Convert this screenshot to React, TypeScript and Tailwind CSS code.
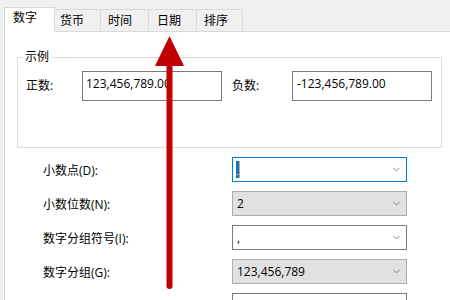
import { ChevronDown } from "lucide-react";

const tabs = [
  { label: "数字", w: "w-[51px]", pl: "pl-[8px]" },
  { label: "货币", w: "w-[46px]", pl: "pl-[5px]" },
  { label: "时间", w: "w-[48px]", pl: "pl-[7px]" },
  { label: "日期", w: "w-[48px]", pl: "pl-[8px]" },
  { label: "排序", w: "w-[46px]", pl: "pl-[7px]" },
];

type Row = { label: string; value: string; kind: "focus" | "gray" | "white" };

const rows: Row[] = [
  { label: "小数点(D):", value: ".", kind: "focus" },
  { label: "小数位数(N):", value: "2", kind: "gray" },
  { label: "数字分组符号(I):", value: ",", kind: "white" },
  { label: "数字分组(G):", value: "123,456,789", kind: "gray" },
  { label: "", value: "", kind: "white" },
];

function Combo({ value, kind }: { value: string; kind: Row["kind"] }) {
  const box =
    kind === "focus"
      ? "bg-white border-[#0078d7]"
      : kind === "gray"
        ? "bg-[#e1e1e1] border-[#adadad]"
        : "bg-white border-[#7a7a7a]";
  return (
    <div className={`flex h-[25px] w-[175px] shrink-0 items-center border pl-[3px] pr-[4px] ${box}`}>
      <div className="flex-1 text-[12px] leading-[16px] text-black">
        {kind === "focus" ? (
          <span className="flex items-end">
            <span className="flex h-[17px] w-[3px] items-end justify-center bg-[#0078d7] pb-[3px]">
              <span className="h-[1px] w-[1px] bg-white" />
            </span>
            <span className="h-[17px] w-[1px] bg-[#f7a13b]" />
          </span>
        ) : (
          <span className="pl-[1px]">{value}</span>
        )}
      </div>
      <ChevronDown size={11} strokeWidth={1.6} className="text-[#5a5a5a]" />
    </div>
  );
}

export default function App() {
  return (
    <div className="relative flex h-[300px] w-[450px] flex-col overflow-hidden bg-[#f0f0f0] font-['Open_Sans','Noto_Sans_CJK_SC',sans-serif] text-[12px] text-black">
      <div className="flex h-[31px] shrink-0 items-end pl-[4px]">
        {tabs.map((t, i) =>
          i === 0 ? (
            <div
              key={t.label}
              className={`relative z-10 -mb-px flex h-[25px] items-start border border-b-0 border-[#d9d9d9] bg-white pt-[2px] ${t.w} ${t.pl}`}
            >
              <span className="leading-[16px]">{t.label}</span>
            </div>
          ) : (
            <div
              key={t.label}
              className={`flex h-[22px] items-start border border-b-0 border-l-0 border-[#d9d9d9] bg-[#f0f0f0] pt-[3px] ${t.w} ${t.pl}`}
            >
              <span className="leading-[16px]">{t.label}</span>
            </div>
          )
        )}
      </div>

      <div className="ml-[4px] flex-1 border-l border-t border-[#d9d9d9] bg-white">
        <fieldset className="ml-[12px] mt-[17px] w-[425px] border border-[#dcdcdc] px-[5px] pb-[46px]">
          <legend className="pl-[2px] pr-[3px] leading-[16px]">示例</legend>
          <div className="mt-[6px] flex items-center">
            <span className="w-[59px] pl-[3px] leading-[16px]">正数:</span>
            <div className="h-[30px] w-[140px] border border-[#7a7a7a] px-[3px] pt-[4px] leading-[16px]">
              123,456,789.00
            </div>
            <span className="w-[70px] pl-[10px] leading-[16px]">负数:</span>
            <div className="h-[30px] w-[140px] border border-[#7a7a7a] px-[4px] pt-[4px] leading-[16px]">
              -123,456,789.00
            </div>
          </div>
        </fieldset>

        <div className="mt-[9px] flex flex-col gap-[9px] pl-[38px]">
          {rows.map((r, i) => (
            <div key={i} className="flex items-center">
              <span className="w-[189px] pt-[2px] leading-[16px]">{r.label}</span>
              <Combo value={r.value} kind={r.kind} />
            </div>
          ))}
        </div>
      </div>

      <svg
        className="pointer-events-none absolute left-0 top-0"
        width="450"
        height="300"
        viewBox="0 0 450 300"
      >
        <line x1="169.5" y1="62" x2="169.5" y2="286" stroke="#c00000" strokeWidth="6" strokeLinecap="round" />
        <polygon points="169.5,36 155,66 184,66" fill="#c00000" />
      </svg>
    </div>
  );
}
